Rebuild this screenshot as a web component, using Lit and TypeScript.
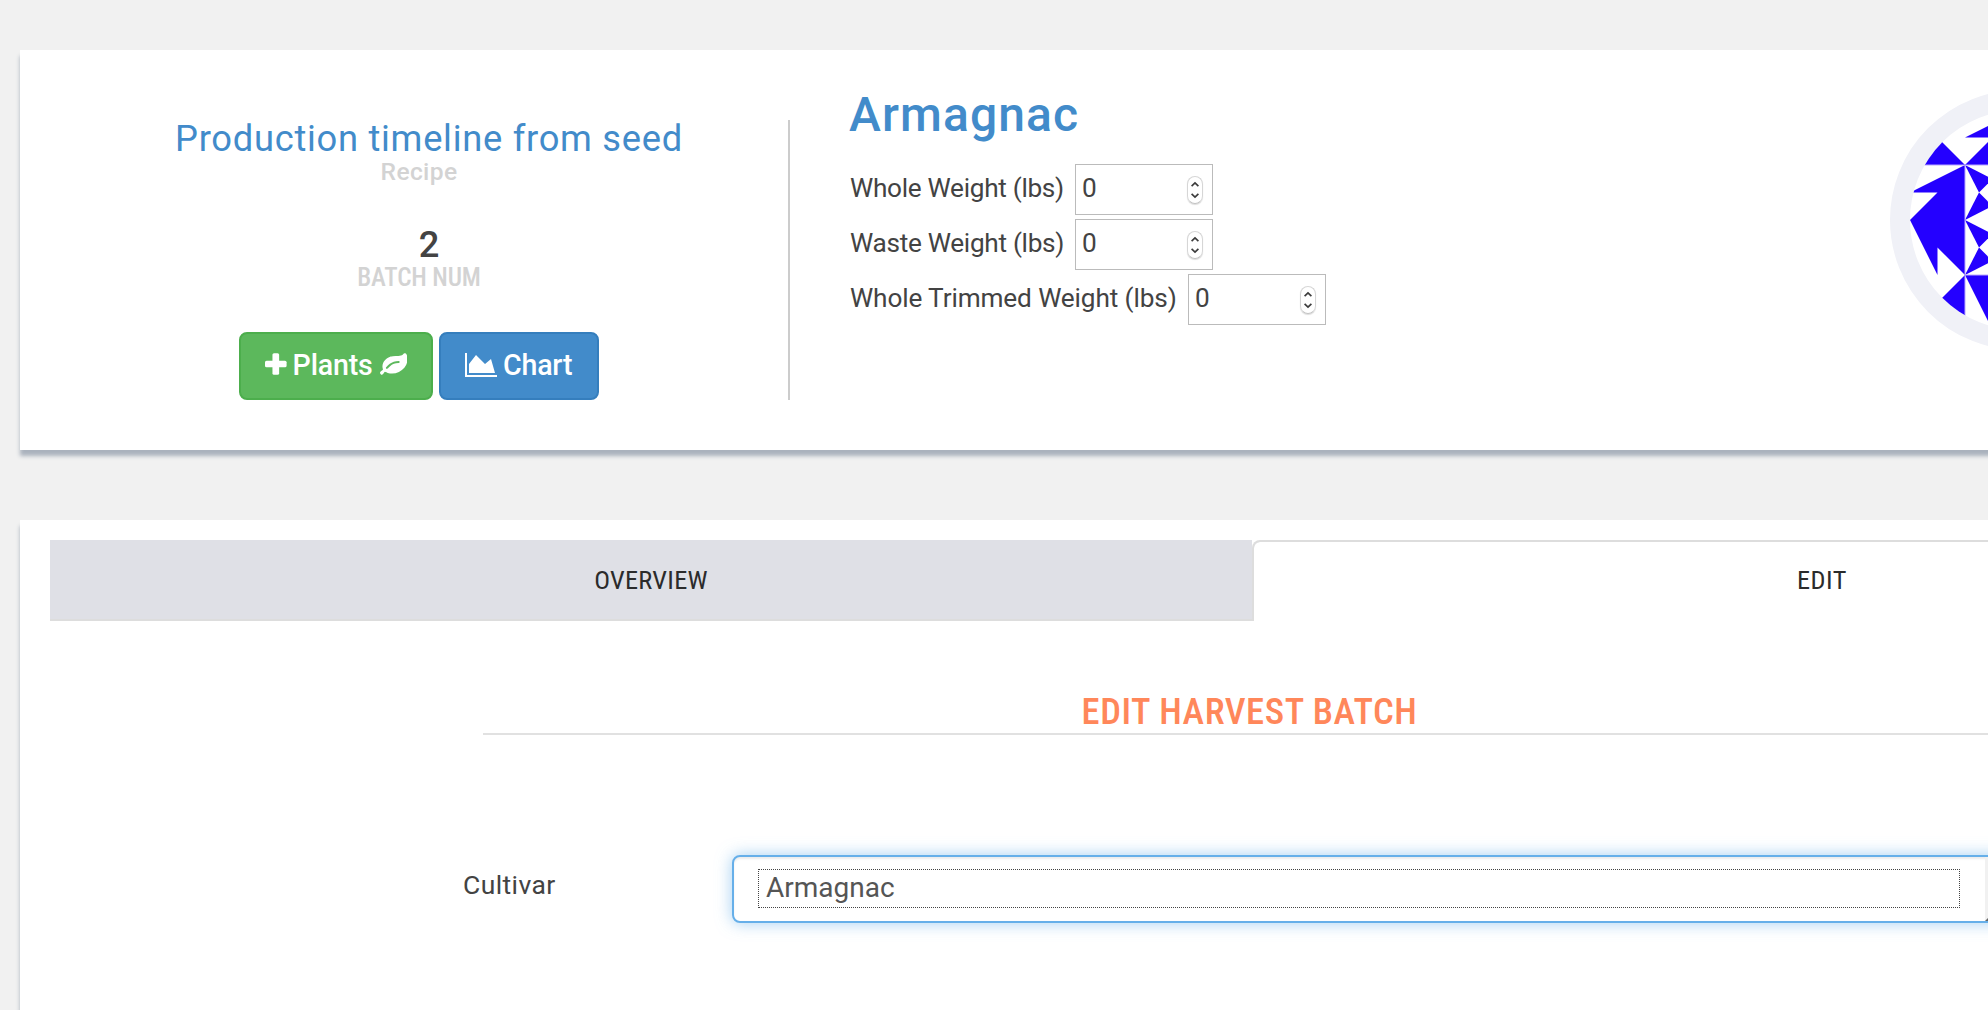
import { LitElement, html, svg, css } from "lit";
import { customElement, property } from "lit/decorators.js";

const plusIcon = svg`<svg class="plus" viewBox="0 0 22 22" width="22" height="22" fill="currentColor">
  <rect x="7.6" y="0" width="6.8" height="22" rx="1.6"/><rect x="0" y="7.6" width="22" height="6.8" rx="1.6"/></svg>`;

const leafIcon = svg`<svg class="leaf" viewBox="0 128 1792 1408" width="28" height="22" fill="currentColor">
  <path d="M1280 704q0-26-19-45t-45-19q-172 0-318 49.5t-259.5 134-235.5 219.5q-19 21-19 45 0 26 19 45t45 19q24 0 45-19 27-24 74-71t67-66q137-124 268.5-176t313.5-52q26 0 45-19t19-45zm512-198q0 95-20 193-46 224-184.5 383t-357.5 268q-214 108-438 108-148 0-286-47-15-5-88-42t-96-37q-16 0-39.5 32t-45 70-52.5 70-60 32q-43 0-63.5-17.5t-45.5-59.5q-2-4-6-11t-5.5-10-3-9.5-1.5-13.5q0-35 31-73.5t68-65.5 68-56 31-48q0-4-14-38t-16-44q-9-51-9-104 0-115 43.5-220t119-184.5 170.5-139 204-95.5q55-18 145-25.5t179.5-9 178.5-6 163.5-24 113.5-56.5l29.5-29.5 29.5-28 27-20 36.5-16 43.5-4.5q39 0 70.5 46t47.5 112 24 124 8 96z"/></svg>`;

const areaChartIcon = svg`<svg class="area" viewBox="0 128 2048 1536" width="32" height="24" fill="currentColor">
  <path d="M2048 1536v128h-2048v-1536h128v1408h1920zm-384-1024l256 896h-1664v-576l448-576 576 576z"/></svg>`;

@customElement("number-box")
export class NumberBox extends LitElement {
  @property({ type: Number }) value = 0;

  static styles = css`
    :host {
      display: flex;
      align-items: center;
      justify-content: space-between;
      box-sizing: border-box;
      width: 138px;
      height: 51px;
      padding: 0 9px 0 6px;
      border: 1px solid #bbb;
      background: #fff;
    }
    .value {
      padding-bottom: 3px;
    }
    .stepper {
      display: block;
      box-sizing: border-box;
      width: 16px;
      height: 28px;
      border: 1px solid #d6d6d6;
      border-bottom-color: #c2c2c2;
      border-radius: 8px;
      box-shadow: 0 1px 1px rgba(0, 0, 0, 0.14);
    }
    .stepper svg {
      display: block;
    }
  `;

  render() {
    return html`<span class="value">${this.value}</span>
      <span class="stepper">
        <svg viewBox="1 1 14 26" width="14" height="26" fill="none" stroke="#3c3c3c" stroke-width="1.7">
          <path d="M4.6 10.2 8 7l3.4 3.2M4.6 17.8 8 21l3.4-3.2" />
        </svg>
      </span>`;
  }
}

@customElement("batch-avatar")
export class BatchAvatar extends LitElement {
  static styles = css`
    :host {
      display: block;
      width: 260px;
      height: 260px;
    }
    svg {
      display: block;
    }
  `;

  render() {
    return html`<svg viewBox="0 0 260 260" width="260" height="260">
      <defs><clipPath id="disc"><circle cx="130" cy="130" r="110" /></clipPath></defs>
      <circle cx="130" cy="130" r="120" fill="#fff" stroke="#f0f1f7" stroke-width="20" />
      <g clip-path="url(#disc)">
        <g transform="translate(20 20)" fill="#2400ff">
          <path d="M0 0 55 55H0z" />
          <path d="M55 27.5 110 0V27.5z" />
          <path d="M55 55 82.5 27.5 110 55z" />
          <path d="M55 55 0 82.5H27.5L0 110 27.5 165V137.5L55 165z" />
          <path d="M55 165V220H0z" />
          <path d="M55 165H110L82.5 220z" />
          <path d="M55 55 82.5 69 69 82.5z" />
          <path d="M69 82.5 82.5 96 55 110z" />
          <path d="M55 110 82.5 124 69 137.5z" />
          <path d="M69 137.5 82.5 151 55 165z" />
          <path d="M55 55H110M55 55V220M0 55H55M55 165H110" stroke="#b9a8ff" stroke-width="1" fill="none" />
        </g>
      </g>
    </svg>`;
  }
}

@customElement("app-root")
export class AppRoot extends LitElement {
  private readonly weights = [
    { label: "Whole Weight (lbs)", value: 0, wide: false },
    { label: "Waste Weight (lbs)", value: 0, wide: false },
    { label: "Whole Trimmed Weight (lbs)", value: 0, wide: true },
  ];

  static styles = css`
    :host {
      display: block;
      height: 1010px;
      overflow: hidden;
      background: #f1f1f1;
      color: #434343;
      font-family: Roboto, "Liberation Sans", sans-serif;
    }
    .page {
      display: flex;
      flex-direction: column;
      gap: 70px;
      padding: 50px 0 0 20px;
    }
    .card {
      box-sizing: border-box;
      width: 2404px;
      background: #fff;
      box-shadow: 0 6px 4px #aab2bd;
    }

    .summary {
      display: flex;
      align-items: flex-start;
      height: 400px;
      padding: 0 274px 0 30px;
    }
    .recipe {
      box-sizing: border-box;
      width: 740px;
      height: 280px;
      margin-top: 70px;
      border-right: 2px solid #ccc;
      text-align: center;
    }
    .big {
      padding-left: 20px;
      font-size: 36.3px;
      line-height: 37px;
      letter-spacing: 0.72px;
    }
    .link {
      color: #428bca;
    }
    .count {
      margin-top: 40px;
      font-weight: 500;
      letter-spacing: 0;
    }
    .caption {
      font-size: 24.6px;
      font-weight: 500;
      line-height: 29px;
      letter-spacing: 0.35px;
      color: #d3d3d3;
    }
    .caption.caps {
      font-size: 25.2px;
      font-stretch: 75%;
      line-height: 30px;
      letter-spacing: -0.15px;
    }
    .actions {
      display: flex;
      justify-content: center;
      gap: 6px;
      margin-top: 39px;
    }
    .btn {
      display: flex;
      align-items: center;
      box-sizing: border-box;
      height: 68px;
      padding: 0 24px 2px;
      border: 2px solid;
      border-radius: 8px;
      color: #fff;
      font-size: 28.6px;
      font-weight: 500;
      letter-spacing: -0.2px;
    }
    .btn.green {
      width: 194px;
      background: #5cb85c;
      border-color: #4cae4c;
    }
    .btn.blue {
      width: 160px;
      background: #428bca;
      border-color: #357ebd;
    }
    .plus {
      margin: 0 6px 2px 0;
    }
    .leaf {
      margin: 0 0 2px 7px;
    }
    .area {
      margin: 0 6px 0 0;
    }

    .details {
      flex: 1;
      margin: 37px 0 0 60px;
    }
    .name {
      margin: 0 0 21px -1px;
      font-size: 48px;
      font-weight: 500;
      line-height: 56px;
      letter-spacing: 1.1px;
      color: #428bca;
    }
    .weights {
      display: flex;
      flex-direction: column;
      gap: 4px;
      font-size: 26.2px;
    }
    .weight {
      display: flex;
      align-items: center;
    }
    .weight-label {
      box-sizing: border-box;
      width: 225px;
      padding-bottom: 3px;
      letter-spacing: -0.3px;
      white-space: nowrap;
    }
    .weight-label.wide {
      width: 338px;
      letter-spacing: -0.12px;
    }
    batch-avatar {
      margin-top: 40px;
    }

    .editor {
      height: 600px;
      padding: 20px 0 0 30px;
    }
    .tabs {
      display: flex;
      height: 81px;
      font-size: 26.3px;
      font-stretch: 75%;
      color: #2b2b2b;
    }
    .tab {
      display: flex;
      align-items: center;
      justify-content: center;
      box-sizing: border-box;
      height: 81px;
    }
    .tab.idle {
      width: 1202px;
      background: #dfe0e6;
      border-bottom: 2px solid #ddd;
      letter-spacing: 0.25px;
    }
    .tab.active {
      width: 1142px;
      padding: 0 2px 4px 0;
      border: 2px solid #ddd;
      border-bottom: 0;
      border-radius: 8px 8px 0 0;
      letter-spacing: 0.5px;
      background: linear-gradient(#fff, #fff) padding-box, #dfe0e6;
    }
    .title {
      width: 1533px;
      margin: 69px 0 0 433px;
      border-bottom: 2px solid #e1e1e1;
      color: #ff875a;
      font-size: 36.6px;
      font-weight: 500;
      font-stretch: 75%;
      line-height: 43px;
      letter-spacing: 0.55px;
      text-align: center;
    }
    .field {
      display: flex;
      align-items: center;
      margin: 120px 0 0 413px;
    }
    .field-label {
      width: 269px;
      padding-bottom: 9px;
      font-size: 26.5px;
      letter-spacing: 0.4px;
    }
    .listbox {
      display: flex;
      justify-content: space-between;
      box-sizing: border-box;
      width: 1285px;
      height: 68px;
      border: 2px solid #66afe9;
      border-radius: 8px;
      background: #fff;
      box-shadow: inset 0 2px 2px rgba(0, 0, 0, 0.075), 0 0 16px rgba(102, 175, 233, 0.6);
    }
    .option {
      box-sizing: border-box;
      width: 1202px;
      height: 39px;
      margin: 12px 0 0 24px;
      padding-left: 7px;
      border: 1px dotted #444;
      font-size: 28px;
      line-height: 36px;
      color: #555;
    }
    .rail {
      display: flex;
      align-items: flex-end;
      width: 30px;
      background: #f1f1f1;
    }
  `;

  render() {
    return html`
      <div class="page">
        <section class="card summary">
          <div class="recipe">
            <div class="big link">Production timeline from seed</div>
            <div class="caption">Recipe</div>
            <div class="big count">2</div>
            <div class="caption caps">BATCH NUM</div>
            <div class="actions">
              <div class="btn green">${plusIcon}<span>Plants</span>${leafIcon}</div>
              <div class="btn blue">${areaChartIcon}<span>Chart</span></div>
            </div>
          </div>
          <div class="details">
            <h1 class="name">Armagnac</h1>
            <div class="weights">
              ${this.weights.map(
                (w) => html`<div class="weight">
                  <span class="weight-label ${w.wide ? "wide" : ""}">${w.label}</span>
                  <number-box .value=${w.value}></number-box>
                </div>`
              )}
            </div>
          </div>
          <batch-avatar></batch-avatar>
        </section>

        <section class="card editor">
          <div class="tabs">
            <div class="tab idle">OVERVIEW</div>
            <div class="tab active">EDIT</div>
          </div>
          <div class="title">EDIT HARVEST BATCH</div>
          <div class="field">
            <span class="field-label">Cultivar</span>
            <div class="listbox">
              <div class="option">Armagnac</div>
              <div class="rail">
                <svg width="3" height="3" viewBox="0 0 3 3"><path d="M0 3 3 0V3z" fill="#666" /></svg>
              </div>
            </div>
          </div>
        </section>
      </div>
    `;
  }
}
